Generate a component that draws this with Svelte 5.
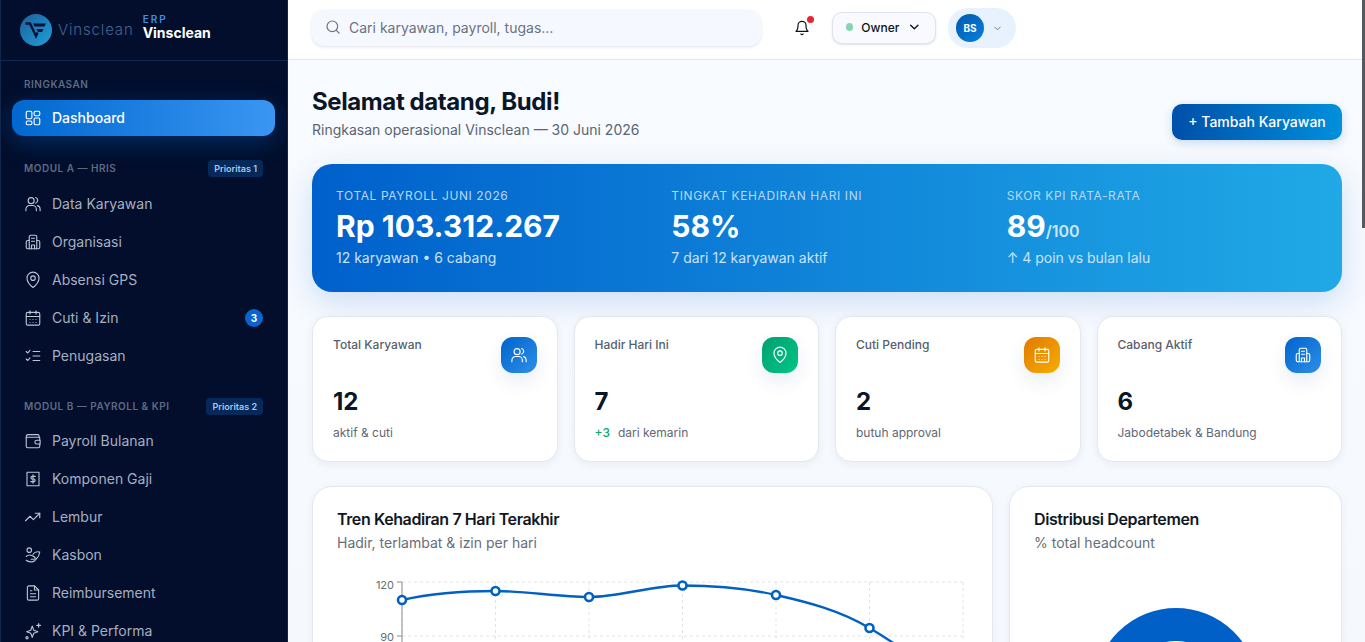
<script>
  const ringkasan = [{ label: 'Dashboard', icon: 'dash', active: true }];
  const hris = [
    { label: 'Data Karyawan', icon: 'users' },
    { label: 'Organisasi', icon: 'building' },
    { label: 'Absensi GPS', icon: 'pin' },
    { label: 'Cuti & Izin', icon: 'calendar', count: 3 },
    { label: 'Penugasan', icon: 'tasks' }
  ];
  const payroll = [
    { label: 'Payroll Bulanan', icon: 'wallet' },
    { label: 'Komponen Gaji', icon: 'receipt' },
    { label: 'Lembur', icon: 'trend' },
    { label: 'Kasbon', icon: 'coins' },
    { label: 'Reimbursement', icon: 'file' },
    { label: 'KPI & Performa', icon: 'spark' }
  ];
  const heroes = [
    { label: 'TOTAL PAYROLL JUNI 2026', value: 'Rp 103.312.267', sub: '12 karyawan • 6 cabang' },
    { label: 'TINGKAT KEHADIRAN HARI INI', value: '58%', sub: '7 dari 12 karyawan aktif' },
    { label: 'SKOR KPI RATA-RATA', value: '89', unit: '/100', sub: '↑ 4 poin vs bulan lalu' }
  ];
  const kpis = [
    { label: 'Total Karyawan', value: '12', sub: 'aktif & cuti', icon: 'users', tone: 'blue' },
    { label: 'Hadir Hari Ini', value: '7', delta: '+3', sub: 'dari kemarin', icon: 'pin', tone: 'green' },
    { label: 'Cuti Pending', value: '2', sub: 'butuh approval', icon: 'calendar', tone: 'amber' },
    { label: 'Cabang Aktif', value: '6', sub: 'Jabodetabek & Bandung', icon: 'building', tone: 'blue' }
  ];
  const points = [[8, 26], [101.5, 17], [195, 23], [288.5, 11.5], [382, 21], [475.5, 54], [569, 116]];
  const gridX = [8, 101.5, 195, 288.5, 382, 475.5, 569];
  const gridY = [8, 62, 116, 170, 224];
  const yLabels = [[120, 8, 15], [90, 62, 67], [60, 116, 120], [30, 170, 174], [0, 224, 228]];
  const curve = 'M8 26C39 19 70 17 101.5 17S164 23 195 23S257 11.5 288.5 11.5S351 14 382 21S445 36 475.5 54S538 96 569 116';
</script>

{#snippet icon(name)}
  <svg class="ic" viewBox="0 0 24 24" fill="none" stroke="currentColor" stroke-width="1.5" stroke-linecap="round" stroke-linejoin="round" aria-hidden="true">
    {#if name === 'dash'}
      <rect x="3" y="3" width="7.5" height="10" rx="1.6" /><rect x="13.5" y="3" width="7.5" height="6" rx="1.6" /><rect x="13.5" y="12" width="7.5" height="9" rx="1.6" /><rect x="3" y="16" width="7.5" height="5" rx="1.6" />
    {:else if name === 'users'}
      <circle cx="9.5" cy="7.5" r="4" /><path d="M2.5 21v-2a5 5 0 0 1 5-5h4a5 5 0 0 1 5 5v2" /><path d="M15.5 3.3a4 4 0 0 1 0 7.6" /><path d="M21.5 21v-2a5 5 0 0 0-3.5-4.8" />
    {:else if name === 'building'}
      <path d="M7 21V5a2 2 0 0 1 2-2h6a2 2 0 0 1 2 2v16" /><path d="M7 10H5a2 2 0 0 0-2 2v7a2 2 0 0 0 2 2h14a2 2 0 0 0 2-2v-7a2 2 0 0 0-2-2h-2" /><path d="M10 7h4M10 11h4M10 21v-5h4v5" />
    {:else if name === 'pin'}
      <path d="M12 22s8-6.600 8-12.500a8 8 0 0 0-16 0C4 15.400 12 22 12 22z" /><circle cx="12" cy="9.500" r="3" />
    {:else if name === 'calendar'}
      <rect x="3" y="4.500" width="18" height="17" rx="2" /><path d="M3 10h18M8 2.500v4M16 2.500v4M8 14h.01M12 14h.01M16 14h.01M8 18h.01M12 18h.01M16 18h.01" />
    {:else if name === 'tasks'}
      <path d="M3 6l2 2 3-3.500M3 16l2 2 3-3.500M12 6h9M12 12h9M12 18h9" />
    {:else if name === 'wallet'}
      <path d="M20 7V5a1.500 1.500 0 0 0-1.500-1.500H5A2.500 2.500 0 0 0 3 6v13a2 2 0 0 0 2 2h14a2 2 0 0 0 2-2v-3" /><path d="M3 7h17a1 1 0 0 1 1 1v3" /><path d="M21 11h-4a2.500 2.500 0 0 0 0 5h4a.5.5 0 0 0 .5-.5v-4a.5.5 0 0 0-.5-.5z" />
    {:else if name === 'receipt'}
      <path d="M4 3h16v18H4z" stroke-dasharray="2 .6" /><path d="M15 8.500h-4a1.750 1.750 0 0 0 0 3.500h2a1.750 1.750 0 0 1 0 3.500H9M12 6.500v11" />
    {:else if name === 'trend'}
      <path d="M2 17l6-6 4.500 4.500L21 7" /><path d="M15 7h6v6" />
    {:else if name === 'coins'}
      <circle cx="7" cy="5.500" r="3" /><path d="M3 14c3-3 6-2 8-1l3 1.500a1.700 1.700 0 0 1-1 3.200H9.500" /><path d="M12 11c2-3 5-4 9-3-.5 3-1 6-4 8.500" /><path d="M3 19c3 2.500 8 3 11 1l3-3.500" />
    {:else if name === 'file'}
      <path d="M14 2.500H6.500a2 2 0 0 0-2 2v15a2 2 0 0 0 2 2h11a2 2 0 0 0 2-2V8z" /><path d="M14 2.500V8h5.500M8.500 13h7M8.500 17h7M8.500 9h2" />
    {:else if name === 'spark'}
      <path d="M11 5.500l2 5.500 5.500 2-5.500 2-2 5.500-2-5.500-5.500-2 5.500-2z" /><path d="M19.500 2v5M17 4.500h5" /><circle cx="4" cy="21" r="1.500" />
    {/if}
  </svg>
{/snippet}

{#snippet navItem(item)}
  <div class="nav-item" class:active={item.active}>
    <span class="nav-ic">{@render icon(item.icon)}</span>
    <span class="nav-label">{item.label}</span>
    {#if item.count}<span class="count">{item.count}</span>{/if}
  </div>
{/snippet}

<div class="shell">
  <aside class="sidebar">
    <div class="brand">
      <div class="logo">
        <svg class="logo-mark" viewBox="0 0 32 32" aria-hidden="true">
          <defs>
            <linearGradient id="lg" x1="0" y1="0" x2="1" y2="1"><stop offset="0" stop-color="#1d5f9c" /><stop offset="1" stop-color="#1fa0d8" /></linearGradient>
          </defs>
          <circle cx="16" cy="16" r="16" fill="url(#lg)" />
          <path d="M5.500 9.500h4.500l6 12.500 1.500-3.500" fill="none" stroke="#04153a" stroke-width="2.400" />
          <path d="M13 9.500h13l-1.500 3H14.500zM16.500 15h7l-1.500 3h-4z" fill="#04153a" />
        </svg>
        <span class="logo-word">Vinsclean</span>
      </div>
      <div class="brand-text">
        <span class="erp">ERP</span>
        <span class="brand-name">Vinsclean</span>
      </div>
    </div>
    <nav class="nav">
      <div class="sec sec-first"><span>RINGKASAN</span></div>
      <div class="items">{#each ringkasan as it}{@render navItem(it)}{/each}</div>
      <div class="sec"><span>MODUL A — HRIS</span><em>Prioritas 1</em></div>
      <div class="items">{#each hris as it}{@render navItem(it)}{/each}</div>
      <div class="sec sec-b"><span>MODUL B — PAYROLL &amp; KPI</span><em>Prioritas 2</em></div>
      <div class="items">{#each payroll as it}{@render navItem(it)}{/each}</div>
    </nav>
  </aside>

  <div class="main">
    <header class="topbar">
      <div class="search">
        <svg class="search-ic" viewBox="0 0 24 24" fill="none" stroke="currentColor" stroke-width="1.800" stroke-linecap="round"><circle cx="11" cy="11" r="8" /><path d="M21 21l-4.300-4.300" /></svg>
        <span>Cari karyawan, payroll, tugas...</span>
      </div>
      <div class="bell">
        <svg viewBox="0 0 24 24" fill="none" stroke="#0b1220" stroke-width="1.800" stroke-linecap="round" stroke-linejoin="round"><path d="M6 8a6 6 0 0 1 12 0c0 7 3 9 3 9H3s3-2 3-9" /><path d="M10.300 21a2 2 0 0 0 3.400 0" /></svg>
        <i></i>
      </div>
      <div class="role">
        <i></i><span>Owner</span>
        <svg viewBox="0 0 24 24" fill="none" stroke="#0b1220" stroke-width="2.200" stroke-linecap="round" stroke-linejoin="round"><path d="M6 9l6 6 6-6" /></svg>
      </div>
      <div class="user">
        <span class="avatar">BS</span>
        <svg viewBox="0 0 24 24" fill="none" stroke="#6b7280" stroke-width="2" stroke-linecap="round" stroke-linejoin="round"><path d="M6 9l6 6 6-6" /></svg>
      </div>
    </header>

    <main class="content">
      <div class="page-head">
        <div>
          <h1>Selamat datang, Budi!</h1>
          <p>Ringkasan operasional Vinsclean — 30 Juni 2026</p>
        </div>
        <div class="add">+ Tambah Karyawan</div>
      </div>

      <section class="hero">
        {#each heroes as h}
          <div class="hero-col">
            <div class="hero-label">{h.label}</div>
            <div class="hero-value">{h.value}{#if h.unit}<small>{h.unit}</small>{/if}</div>
            <div class="hero-sub">{h.sub}</div>
          </div>
        {/each}
      </section>

      <section class="kpis">
        {#each kpis as k}
          <div class="kpi">
            <div class="kpi-top">
              <span class="kpi-label">{k.label}</span>
              <span class="kpi-ic {k.tone}">{@render icon(k.icon)}</span>
            </div>
            <div class="kpi-value">{k.value}</div>
            <div class="kpi-sub">{#if k.delta}<b>{k.delta}</b>{/if}{k.sub}</div>
          </div>
        {/each}
      </section>

      <section class="charts">
        <div class="card">
          <h2>Tren Kehadiran 7 Hari Terakhir</h2>
          <p>Hadir, terlambat &amp; izin per hari</p>
          <div class="chart">
            <svg viewBox="0 0 580 240" width="580" height="240" aria-hidden="true">
              {#each gridX as x}<line x1={x} x2={x} y1="8" y2="224" class="grid" />{/each}
              {#each gridY as y}<line x1="8" x2="569" y1={y} y2={y} class="grid" />{/each}
              <line x1="8" x2="8" y1="8" y2="224" class="axis" />
              {#each yLabels as [v, y, ty]}
                <line x1="3" x2="8" y1={y} y2={y} class="axis" />
                <text x="0" y={ty} text-anchor="end" class="tick">{v}</text>
              {/each}
              <path d={curve} fill="none" stroke="#0060c4" stroke-width="2.400" />
              {#each points as [x, y]}<circle cx={x} cy={y} r="4" fill="#fff" stroke="#0060c4" stroke-width="2.600" />{/each}
            </svg>
          </div>
        </div>
        <div class="card">
          <h2>Distribusi Departemen</h2>
          <p>% total headcount</p>
          <div class="donut"></div>
        </div>
      </section>
    </main>
  </div>
  <span class="thumb"></span>
</div>

<style>
  :global(body) { margin: 0; font-family: Inter, "Liberation Sans", sans-serif; overflow: hidden; }
  .shell { position: relative; display: flex; height: 642px; background: #f7faff; }
  .thumb { position: absolute; top: 0; right: 0; width: 3px; height: 228px; background: #55595f; }
  .sidebar {
    width: 288px; flex: none; box-sizing: border-box; overflow: hidden;
    background: #020e2c; border-left: 1px solid #10264a; border-right: 1px solid #10264a; color: #a9b4c6;
  }
  .brand { height: 61px; box-sizing: border-box; display: flex; align-items: center; gap: 9px; padding: 0 0 7px 19px; border-bottom: 1px solid #12294e; }
  .logo { display: flex; align-items: center; gap: 6px; }
  .logo-mark { width: 32px; height: 32px; margin-top: 6px; }
  .logo-word { font-size: 15px; font-weight: 300; letter-spacing: 0.85px; color: #41658f; margin-top: 6px; }
  .brand-text { display: flex; flex-direction: column; line-height: 1; }
  .erp { font-size: 10px; font-weight: 600; letter-spacing: 2px; color: #3f8fe0; margin-bottom: 2px; }
  .brand-name { font-size: 14px; font-weight: 700; color: #fff; }
  .nav { padding: 0 12px 0 11px; }
  .sec { display: flex; justify-content: space-between; align-items: center; height: 18px; margin: 23px 12px 9px 12px; font-size: 10px; font-weight: 600; letter-spacing: 0.5px; color: #5d6b82; }
  .sec-first { margin-top: 14px; margin-bottom: 7px; }
  .sec-b { margin-bottom: 8px; }
  .sec em { font-style: normal; font-size: 9px; font-weight: 600; letter-spacing: 0; color: #a8c6ec; background: #07295a; border-radius: 4px; padding: 3px 6px; }
  .items { display: flex; flex-direction: column; gap: 2px; }
  .nav-item { height: 36px; display: flex; align-items: center; gap: 10px; padding: 0 12px 1px; border-radius: 12px; font-size: 14px; line-height: 20px; color: #a5afc0; box-sizing: border-box; }
  .nav-item.active { color: #fff; font-weight: 500; background: linear-gradient(90deg, #0068d0, #3a96f2); box-shadow: 0 6px 24px rgba(0, 104, 208, .35); }
  .nav-ic { display: flex; color: #bcc6d6; }
  .nav-item.active .nav-ic { color: #fff; }
  .ic { width: 18px; height: 18px; display: block; }
  .nav-label { flex: 1; }
  .count { width: 18px; height: 18px; border-radius: 50%; background: #0b64cc; color: #fff; font-size: 10px; font-weight: 700; display: flex; align-items: center; justify-content: center; }

  .main { flex: 1; min-width: 0; height: 642px; overflow: hidden; background: linear-gradient(180deg, #f8fbff, #f5f8fd); }
  .topbar { height: 60px; box-sizing: border-box; background: #fff; border-bottom: 1px solid #e4e8ee; display: flex; align-items: center; padding: 0 0 3px 24px; }
  .search { width: 449px; height: 36px; box-sizing: border-box; display: flex; align-items: center; gap: 8px; padding: 0 13px 2px; background: #f5f9ff; border-radius: 12px; box-shadow: 0 1px 3px rgba(15, 40, 80, .14); font-size: 14px; color: #6b7280; }
  .search-ic { width: 16px; height: 16px; color: #6b7280; flex: none; }
  .bell { position: relative; width: 16px; height: 16px; margin-left: 33px; }
  .bell svg { width: 16px; height: 16px; display: block; }
  .bell i { position: absolute; top: -4px; right: -4px; width: 7px; height: 7px; border-radius: 50%; background: #e5252f; }
  .role { display: flex; align-items: center; width: 104px; height: 32px; box-sizing: border-box; margin-left: 22px; padding: 0 13px 2px; background: #f8faff; border-radius: 10px; border: 1px solid #dfe3ea; box-shadow: 0 1px 2px rgba(15, 40, 80, .14); font-size: 12px; font-weight: 500; color: #0b1220; }
  .role i { width: 8px; height: 8px; border-radius: 50%; background: #86d6b1; margin-right: 8px; }
  .role svg { width: 16px; height: 16px; margin-left: 8px; }
  .user { display: flex; align-items: center; width: 68px; height: 40px; box-sizing: border-box; margin-left: 12px; padding: 0 8px; border-radius: 20px; background: #e8f2fe; }
  .avatar { width: 28px; height: 28px; border-radius: 50%; background: linear-gradient(135deg, #0058ae, #0a80dc); color: #fff; font-size: 10px; font-weight: 700; display: flex; align-items: center; justify-content: center; }
  .user svg { width: 11px; height: 11px; margin-left: 8px; }

  .content { padding: 0 23px 0 24px; box-sizing: border-box; }
  .page-head { display: flex; justify-content: space-between; align-items: flex-end; padding-top: 27px; height: 80px; box-sizing: border-box; }
  h1 { margin: 0; font-size: 24px; line-height: 30px; font-weight: 700; letter-spacing: -0.4px; color: #0a1628; }
  .page-head p { margin: 3px 0 0; font-size: 14px; line-height: 20px; color: #5b6472; }
  .add { width: 170px; height: 36px; box-sizing: border-box; padding-bottom: 2px; display: flex; align-items: center; justify-content: center; border-radius: 10px; background: linear-gradient(90deg, #004fa8, #0090dc); color: #fff; font-size: 14px; font-weight: 500; box-shadow: 0 3px 10px rgba(0, 90, 180, .2); }

  .hero { margin-top: 24px; height: 128px; box-sizing: border-box; padding: 24px; display: grid; grid-template-columns: repeat(3, 1fr); gap: 24px; border-radius: 20px; background: linear-gradient(90deg, #0060cc, #20a9e6); box-shadow: 0 10px 30px rgba(0, 100, 200, .18); color: #fff; }
  .hero-label { font-size: 12px; line-height: 16px; letter-spacing: 0.6px; color: #b6d8f6; }
  .hero-value { font-size: 30px; line-height: 36px; height: 36px; font-weight: 700; margin-top: 4px; }
  .hero-value small { font-size: 16px; line-height: 1; font-weight: 600; color: #cfe6fb; }
  .hero-sub { font-size: 14px; line-height: 20px; margin-top: 4px; color: #c9e2f9; }

  .kpis { margin-top: 24px; display: grid; grid-template-columns: repeat(4, 1fr); gap: 16px; }
  .kpi { height: 146px; box-sizing: border-box; padding: 20px; background: #fff; border-radius: 16px; border: 1px solid #e3e8f0; box-shadow: 0 2px 8px rgba(20, 50, 100, .06); }
  .kpi-top { display: flex; justify-content: space-between; align-items: flex-start; height: 36px; }
  .kpi-label { font-size: 12px; font-weight: 500; line-height: 15px; color: #565f6e; }
  .kpi-ic { width: 36px; height: 36px; border-radius: 12px; color: #fff; display: flex; align-items: center; justify-content: center; box-shadow: 0 8px 18px rgba(30, 80, 160, .1); }
  .kpi-ic.blue { background: linear-gradient(135deg, #0064cc, #2e8ee8); }
  .kpi-ic.green { background: linear-gradient(135deg, #00a070, #00c585); }
  .kpi-ic.amber { background: linear-gradient(135deg, #e07a00, #f7ad00); }
  .kpi-value { margin-top: 13px; font-size: 24px; line-height: 32px; font-weight: 700; color: #0a1628; }
  .kpi-sub { margin-top: 7px; font-size: 12px; line-height: 16px; color: #5f6775; }
  .kpi-sub b { font-weight: 500; color: #0fa968; margin-right: 8px; }

  .charts { margin-top: 24px; display: grid; grid-template-columns: minmax(0, 1fr) 333px; gap: 16px; align-items: start; }
  .card { min-width: 0; background: #fff; border-radius: 20px; border: 1px solid #e3e8f0; box-shadow: 0 2px 8px rgba(20, 50, 100, .05); padding: 22px 24px 24px; height: 400px; box-sizing: border-box; }
  h2 { margin: 0; font-size: 16px; line-height: 20px; font-weight: 600; letter-spacing: -0.4px; color: #0f1724; }
  .card p { margin: 4px 0 0; font-size: 14px; line-height: 20px; color: #666e7b; }
  .chart { margin: 21px 0 0 57px; }
  .chart svg { display: block; overflow: visible; }
  .grid { stroke: #dfe3e8; stroke-dasharray: 3 3; }
  .axis { stroke: #9a9ea5; stroke-width: 1.200; }
  .tick { font-size: 11px; fill: #666e7b; }
  .donut { width: 164px; height: 164px; border-radius: 50%; box-sizing: border-box; border: 33px solid #0060c8; margin: 55px auto 0; }
</style>
